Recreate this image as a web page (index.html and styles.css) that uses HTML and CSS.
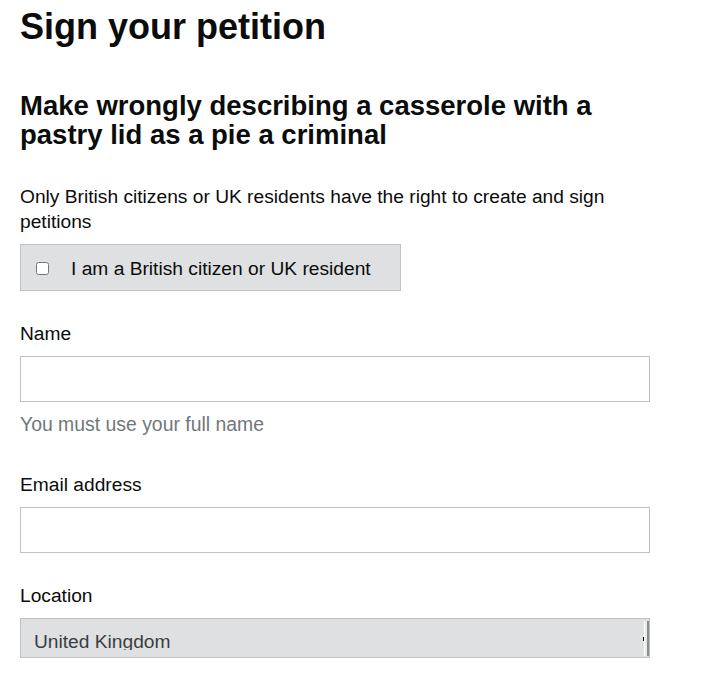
FILE: index.html
```html
<!DOCTYPE html>
<html lang="en">
<head>
<meta charset="utf-8">
<title>Sign your petition</title>
<link rel="stylesheet" href="styles.css">
</head>
<body>
<main class="page">
  <h1 class="title">Sign your petition</h1>
  <h2 class="petition">Make wrongly describing a casserole with a pastry lid as a pie a criminal</h2>
  <p class="intro">Only British citizens or UK residents have the right to create and sign petitions</p>
  <label class="block-label">
    <input type="checkbox" class="check">
    <span>I am a British citizen or UK resident</span>
  </label>

  <div class="field field-name">
    <label class="field-label" for="name">Name</label>
    <input id="name" class="text-input" type="text">
    <p class="hint">You must use your full name</p>
  </div>

  <div class="field field-email">
    <label class="field-label" for="email">Email address</label>
    <input id="email" class="text-input" type="email">
  </div>

  <div class="field field-location">
    <span class="field-label">Location</span>
    <div class="select">
      <div class="select-value"><span>United Kingdom</span></div>
      <div class="select-edge"><i class="select-tick"></i></div>
    </div>
  </div>
</main>
</body>
</html>
```

FILE: styles.css
```css
* { box-sizing: border-box; }

html, body {
  margin: 0;
  padding: 0;
  background: #ffffff;
}

body {
  font-family: "Liberation Sans", Arial, sans-serif;
  color: #0b0c0c;
  font-size: 19.2px;
  line-height: 25px;
}

.page {
  padding: 7px 20px 0 20px;
  width: 713px;
}

.title {
  margin: 0;
  font-size: 36px;
  line-height: 40px;
  font-weight: 700;
}

.petition {
  margin: 44px 0 0 0;
  font-size: 27.5px;
  line-height: 29px;
  font-weight: 700;
  width: 620px;
}

.intro {
  margin: 35px 0 0 0;
  width: 630px;
}

.block-label {
  display: flex;
  align-items: center;
  width: 381px;
  height: 47px;
  margin-top: 10px;
  padding: 1px 0 0 15px;
  background: #dee0e2;
  border: 1px solid #bfc1c3;
}

.check {
  margin: 0 22px 0 0;
  width: 13px;
  height: 13px;
}

.field {
  display: flex;
  flex-direction: column;
}

.field-name { margin-top: 30px; }
.field-email { margin-top: 35px; }
.field-location { margin-top: 30px; }

.field-label {
  display: block;
  margin-bottom: 10px;
}

.text-input {
  width: 630px;
  height: 46px;
  margin: 0;
  border: 1px solid #bfc1c3;
  background: #ffffff;
  font: inherit;
}

.hint {
  margin: 10px 0 0 0;
  color: #6f777b;
  font-size: 19.4px;
}

.select {
  display: flex;
  width: 630px;
  height: 40px;
  background: #dee0e2;
  border: 1px solid #bfc1c3;
}

.select-value {
  flex: 1;
  padding: 10px 0 0 13px;
  overflow: hidden;
  color: #3b3e40;
}

.select-value span {
  display: block;
  height: 21px;
  line-height: 25px;
  overflow: hidden;
}

.select-edge {
  width: 5px;
  margin: 2px 0 1px 0;
  border-left: 1px solid #ffffff;
  border-right: 2px solid #8a8c8e;
  background: #e8e9ea;
  display: flex;
  align-items: center;
}

.select-tick {
  display: block;
  width: 1px;
  height: 4px;
  background: #0b0c0c;
  margin-left: -2px;
}
```
